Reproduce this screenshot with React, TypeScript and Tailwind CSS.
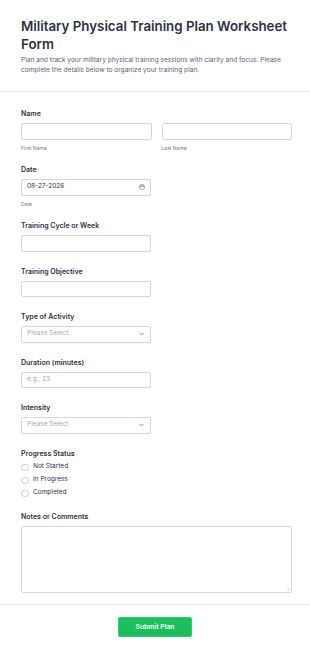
import React from "react";

function Label({ children }: { children: React.ReactNode }) {
  return (
    <div className="text-[7px] leading-[10px] font-semibold text-[#2c3345] mb-[4px]">{children}</div>
  );
}

function Sub({ children }: { children: React.ReactNode }) {
  return <div className="text-[5px] leading-[7px] text-[#6f7a8f] mt-[5px]">{children}</div>;
}

const inputCls =
  "h-[16.5px] rounded-[2px] border border-[#d3d8e2] bg-white shadow-[0_1px_1px_rgba(0,0,0,0.03)]";

function Chevron() {
  return (
    <svg width="5" height="4" viewBox="0 0 10 6" fill="none" className="shrink-0">
      <path d="M1 1l4 4 4-4" stroke="#6b7280" strokeWidth="1.6" strokeLinecap="round" strokeLinejoin="round" />
    </svg>
  );
}

function SelectBox() {
  return (
    <div className={`${inputCls} w-[130px] flex items-center justify-between pl-[5px] pr-[6px]`}>
      <span className="text-[6.5px] text-[#a2a9b8]">Please Select</span>
      <Chevron />
    </div>
  );
}

function Radio({ label }: { label: string }) {
  return (
    <div className="h-[13px] flex items-center gap-[4.5px]">
      <div className="w-[7.5px] h-[7.5px] rounded-full border border-[#c9ced9] bg-white" />
      <span className="text-[6.5px] text-[#2c3345]">{label}</span>
    </div>
  );
}

export default function App() {
  return (
    <div className="w-[310px] min-h-[654px] bg-white" style={{ fontFamily: "Inter, 'Noto Sans', sans-serif" }}>
      <div className="pl-[21px] pr-[12px] pt-[17px] pb-[16px] border-b border-[#e6e8ee]">
        <h1 className="text-[13.3px] leading-[18px] font-semibold text-[#2c3345]">
          Military Physical Training Plan Worksheet Form
        </h1>
        <p className="mt-[2px] pr-[6px] text-[6.6px] leading-[10px] text-[#57647e]">
          Plan and track your military physical training sessions with clarity and focus. Please complete the details below to organize your training plan.
        </p>
      </div>

      <div className="pl-[21px] pr-[18px] pt-[17px] pb-[11px] border-b border-[#eceef2]">
        <div>
          <Label>Name</Label>
          <div className="grid grid-cols-2 gap-[10px]">
            <div>
              <div className={`${inputCls} w-full`} />
              <Sub>First Name</Sub>
            </div>
            <div>
              <div className={`${inputCls} w-full`} />
              <Sub>Last Name</Sub>
            </div>
          </div>
        </div>

        <div className="mt-[13.5px]">
          <Label>Date</Label>
          <div className={`${inputCls} w-[130px] flex items-center justify-between pl-[5px] pr-[5px]`}>
            <span className="text-[6.5px] text-[#2c3345]">08-27-2026</span>
            <svg width="6" height="6" viewBox="0 0 12 12" fill="none">
              <rect x="1.5" y="2" width="9" height="8.5" rx="1.5" stroke="#6b7280" strokeWidth="1.1" />
              <path d="M1.5 5h9M4 1v2M8 1v2" stroke="#6b7280" strokeWidth="1.1" strokeLinecap="round" />
            </svg>
          </div>
          <Sub>Date</Sub>
        </div>

        <div className="mt-[13.5px]">
          <Label>Training Cycle or Week</Label>
          <div className={`${inputCls} w-[130px]`} />
        </div>

        <div className="mt-[15px]">
          <Label>Training Objective</Label>
          <div className={`${inputCls} w-[130px]`} />
        </div>

        <div className="mt-[15px]">
          <Label>Type of Activity</Label>
          <SelectBox />
        </div>

        <div className="mt-[15px]">
          <Label>Duration (minutes)</Label>
          <div className={`${inputCls} w-[130px] flex items-center pl-[5px]`}>
            <span className="text-[6.5px] text-[#a2a9b8]">e.g., 23</span>
          </div>
        </div>

        <div className="mt-[15px]">
          <Label>Intensity</Label>
          <SelectBox />
        </div>

        <div className="mt-[15px]">
          <div className="text-[7px] leading-[10px] font-semibold text-[#2c3345]">Progress Status</div>
          <div className="mt-[2.3px]">
            <Radio label="Not Started" />
            <Radio label="In Progress" />
            <Radio label="Completed" />
          </div>
        </div>

        <div className="mt-[12.5px]">
          <Label>Notes or Comments</Label>
          <div className="relative h-[67px] w-full rounded-[2px] border border-[#d3d8e2] bg-white">
            <svg className="absolute right-[1px] bottom-[1px]" width="4" height="4" viewBox="0 0 8 8">
              <path d="M7 2L2 7M7 5L5 7" stroke="#a0a6b2" strokeWidth="1" />
            </svg>
          </div>
        </div>
      </div>

      <div className="flex justify-center pt-[11.5px] pb-[17px]">
        <button className="w-[74px] h-[20px] rounded-[2px] bg-[#1dbf5c] border border-[#2ed06b] text-white text-[6.8px] font-semibold">
          Submit Plan
        </button>
      </div>
    </div>
  );
}
